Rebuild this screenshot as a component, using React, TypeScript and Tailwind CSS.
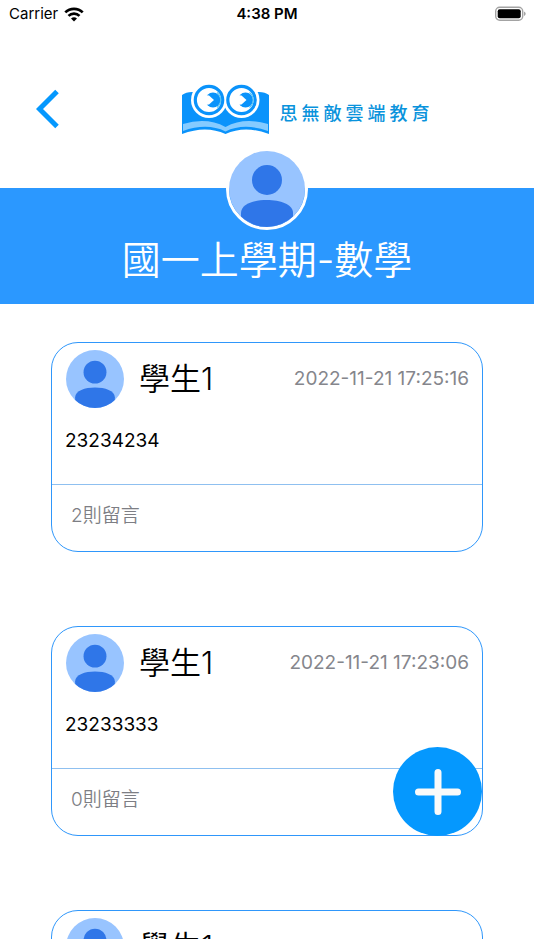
type Post = {
  id: number;
  author: string;
  time?: string;
  body?: string;
  comments?: string;
};

const posts: Post[] = [
  { id: 1, author: "學生1", time: "2022-11-21 17:25:16", body: "23234234", comments: "2則留言" },
  { id: 2, author: "學生1", time: "2022-11-21 17:23:06", body: "23233333", comments: "0則留言" },
  { id: 3, author: "學生1" },
];

const brand = ["思", "無", "敵", "雲", "端", "教", "育"];

function Avatar({ className }: { className: string }) {
  return (
    <svg viewBox="0 0 76 76" className={`shrink-0 rounded-full bg-[#98c4ff] ${className}`} aria-hidden="true">
      <circle cx="38" cy="29" r="15" fill="#2f76e8" />
      <path d="M12 76V62C12 53 25 49 38 49S64 53 64 62V76Z" fill="#2f76e8" />
    </svg>
  );
}

function StatusBar() {
  return (
    <div className="grid h-7 shrink-0 grid-cols-3 items-center px-2 text-[15px] leading-5 text-black">
      <div className="flex items-center gap-1.5 pl-px">
        <span>Carrier</span>
        <svg width="20" height="15" viewBox="0 0 20 15" fill="none" stroke="#000" strokeWidth="2.700" aria-hidden="true">
          <path d="M1.300 5.400a12.400 12.400 0 0 1 17.400 0" />
          <path d="M4.500 8.900a7.800 7.800 0 0 1 11 0" />
          <path d="M10 14.600 7 11.600a4.300 4.300 0 0 1 6 0Z" fill="#000" stroke="none" />
        </svg>
      </div>
      <div className="text-center font-semibold">4:38 PM</div>
      <svg className="justify-self-end" width="32" height="16" viewBox="0 0 32 16" aria-hidden="true">
        <rect x="1.700" y="1.200" width="27" height="13" rx="4" fill="none" stroke="#a3a3a3" strokeWidth="1.400" />
        <rect x="3.700" y="3.200" width="23" height="9" rx="2" fill="#000" />
        <path d="M30 5.500v4.500q1.700-.7 1.700-2.200T30 5.500Z" fill="#a3a3a3" />
      </svg>
    </div>
  );
}

function Eye({ cx }: { cx: number }) {
  return (
    <g transform={`translate(${cx} 16)`}>
      <circle r="13.700" fill="#fff" stroke="#0a93fb" strokeWidth="3.200" />
      <circle cx="4" cy="0" r="7.600" fill="#0a93fb" />
      <path d="M-5 -5L0 -4.500L5 0L0 4.500L-5 5Z" fill="#fff" />
      <path d="M8 -7.500A9.500 9.500 0 0 1 8 7.500" fill="none" stroke="#5cc4f2" strokeWidth="1.200" />
    </g>
  );
}

function Logo() {
  return (
    <svg width="89" height="51" viewBox="0 0 89 51" aria-hidden="true">
      <path d="M1 11Q5 8 11 8H78Q84 8 88 11V50Q64 41 44.500 50Q25 41 1 50Z" fill="#0a93fb" />
      <path d="M2 40Q26 33 44.500 43Q63 33 87 40V47Q63 38.500 44.500 47.500Q26 38.500 2 47Z" fill="#86cbff" />
      <circle cx="28" cy="16" r="18" fill="#fff" />
      <circle cx="60.500" cy="16" r="18" fill="#fff" />
      <Eye cx={28} />
      <Eye cx={60.5} />
    </svg>
  );
}

function PostCard({ post }: { post: Post }) {
  return (
    <article className="flex h-[210px] shrink-0 flex-col rounded-[27px] border border-[#2f97fb]">
      <div className="flex items-center pt-[7px] pr-[13px] pl-3.5">
        <Avatar className="size-[58px]" />
        <h2 className="ml-[15px] text-[31px] leading-9 font-[350] text-black">{post.author}</h2>
        {post.time && <time className="ml-auto text-[19px] leading-6 text-[#85868c]">{post.time}</time>}
      </div>
      {post.body && <p className="mt-[21px] pl-[13px] text-[19px] leading-6 text-black">{post.body}</p>}
      {post.comments && (
        <a href="#comments" className="mt-auto flex h-[67px] items-center border-t border-[#8fc0f0] pb-[3px] pl-[19px] text-[19px] font-[350] text-[#7d7e84]">
          {post.comments}
        </a>
      )}
    </article>
  );
}

export default function App() {
  return (
    <div
      lang="zh-Hant"
      className="flex h-screen flex-col bg-white pb-[11px] font-['Inter','Noto_Sans_CJK_TC',sans-serif]"
    >
      <StatusBar />
      <header className="flex h-40 shrink-0 items-center justify-center px-7 pt-0.5">
        <button type="button" aria-label="返回" className="flex size-10 items-center justify-center">
          <svg width="24" height="40" viewBox="0 0 24 40" fill="none" stroke="#0598fe" strokeWidth="5" aria-hidden="true">
            <path d="M21 2.500 3.500 20 21 37.500" />
          </svg>
        </button>
        <div className="flex flex-1 items-center justify-center gap-2.5 pl-9">
          <Logo />
          <div className="flex gap-1 pt-2.5 text-[18px] leading-6 font-medium text-[#0a93dc]">
            {brand.map((c) => (
              <span key={c}>{c}</span>
            ))}
          </div>
        </div>
      </header>
      <section className="relative flex h-[116px] shrink-0 items-end justify-center bg-[#2b98ff] pb-[18px]">
        <div className="absolute -top-10 left-1/2 -translate-x-1/2 rounded-full border-3 border-white">
          <Avatar className="size-[76px]" />
        </div>
        <h1 className="text-[39px] leading-[52px] font-[350] text-white">國一上學期-數學</h1>
      </section>
      <main className="flex min-h-0 flex-1 flex-col gap-[74px] overflow-y-auto px-[51px] pt-[38px] [scrollbar-width:none]">
        {posts.map((p) => (
          <PostCard key={p.id} post={p} />
        ))}
      </main>
      <button
        type="button"
        aria-label="新增"
        className="fixed right-[52px] bottom-[114px] flex size-[89px] items-center justify-center rounded-full bg-[#0598fe]"
      >
        <svg width="48" height="48" viewBox="0 0 48 48" stroke="#fafafa" strokeWidth="7" strokeLinecap="round" aria-hidden="true">
          <path d="M24 4.500v39M4.500 24h39" />
        </svg>
      </button>
    </div>
  );
}
